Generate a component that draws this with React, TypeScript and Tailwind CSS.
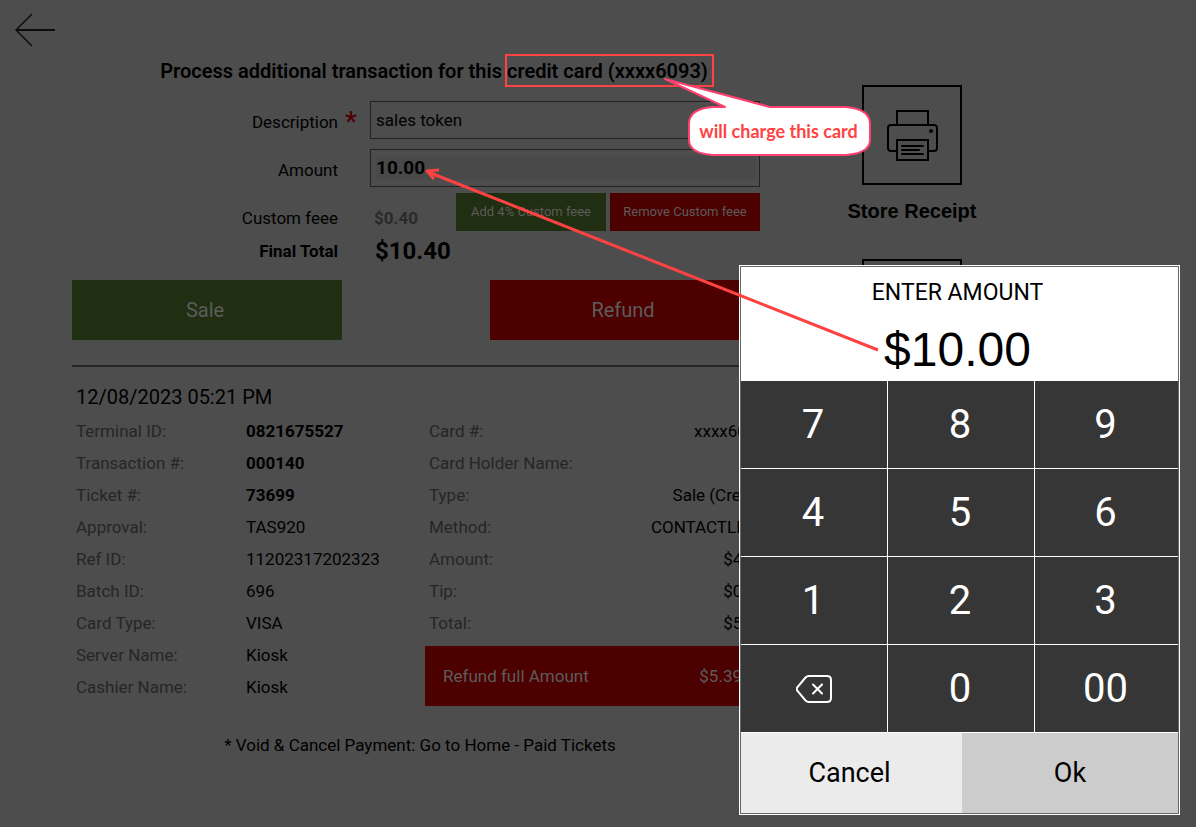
import { ReactNode } from 'react';

const leftDetails = [
  { label: 'Terminal ID:', value: '0821675527', bold: true },
  { label: 'Transaction #:', value: '000140', bold: true },
  { label: 'Ticket #:', value: '73699', bold: true },
  { label: 'Approval:', value: 'TAS920' },
  { label: 'Ref ID:', value: '11202317202323' },
  { label: 'Batch ID:', value: '696' },
  { label: 'Card Type:', value: 'VISA' },
  { label: 'Server Name:', value: 'Kiosk' },
  { label: 'Cashier Name:', value: 'Kiosk' },
];

const rightDetails = [
  { label: 'Card #:', value: 'xxxx6093' },
  { label: 'Card Holder Name:', value: '' },
  { label: 'Type:', value: 'Sale (Credit)' },
  { label: 'Method:', value: 'CONTACTLESS' },
  { label: 'Amount:', value: '$4.90' },
  { label: 'Tip:', value: '$0.49' },
  { label: 'Total:', value: '$5.39' },
];

const keys = ['7', '8', '9', '4', '5', '6', '1', '2', '3', 'back', '0', '00'];

function ArrowLeft() {
  return (
    <svg width="40" height="34" viewBox="0 0 40 34" fill="none" stroke="#0c0c0c">
      <path d="M1 17H40" strokeWidth="2" />
      <path d="M17 1L1 17L17 33" strokeWidth="1.5" />
    </svg>
  );
}

function Printer() {
  return (
    <svg width="52" height="52" viewBox="0 0 52 52" fill="none" stroke="#000" strokeWidth="2">
      <path d="M11 16V2H42V16" />
      <path d="M11 42H5Q2 42 2 39V19Q2 16 5 16H48Q51 16 51 19V39Q51 42 48 42H42" />
      <path d="M11 31H42V51H11Z" />
      <path d="M16 37H37M16 41H33M16 45H37" strokeLinecap="round" />
      <circle cx="45" cy="22" r="2" fill="#000" stroke="none" />
    </svg>
  );
}

function Backspace() {
  return (
    <svg width="36" height="28" viewBox="0 0 36 28" fill="none" stroke="#fff" strokeWidth="2">
      <path d="M13 1H31Q35 1 35 5V23Q35 27 31 27H13Q11 27 9.500 25.500L1.500 16Q0 14 1.500 12L9.500 2.500Q11 1 13 1Z" />
      <path d="M17 9.500L26 18.500M26 9.500L17 18.500" strokeLinecap="round" />
    </svg>
  );
}

function FieldLabel({ htmlFor, children }: { htmlFor: string; children: ReactNode }) {
  return (
    <label htmlFor={htmlFor} className="pt-1 text-right">
      {children}
    </label>
  );
}

function TransactionForm() {
  return (
    <form className="flex flex-col">
      <div className="grid grid-cols-[266px_32px_1fr] items-center gap-y-[10px]">
        <FieldLabel htmlFor="description">Description</FieldLabel>
        <span className="pr-1.5 pt-1 text-center text-[28px] leading-[34px] text-[#4d0000]">*</span>
        <input
          id="description"
          defaultValue="sales token"
          className="h-[38px] w-full border border-[#222] px-[5px]"
        />

        <FieldLabel htmlFor="amount">Amount</FieldLabel>
        <span />
        <div className="flex h-[38px] items-center border border-[#222] pl-[5px] pr-[3px]">
          <input
            id="amount"
            defaultValue="10.00"
            className="h-6 w-full bg-[#494949] text-[19px] font-bold"
          />
        </div>
      </div>

      <div className="mt-[6px] grid grid-cols-[266px_32px_1fr] items-center">
        <span className="pt-3 text-right">Custom feee</span>
        <span />
        <div className="flex items-center justify-between">
          <span className="pt-3 pl-1 font-bold text-[#2a2a2a]">$0.40</span>
          <div className="flex gap-1 text-[13px] text-[#5c5c5c]">
            <button type="button" className="h-[38px] w-[150px] bg-[#202e11]">
              Add 4% Custom feee
            </button>
            <button type="button" className="h-[38px] w-[150px] bg-[#4d0000]">
              Remove Custom feee
            </button>
          </div>
        </div>
      </div>

      <div className="mt-1 grid grid-cols-[266px_32px_1fr] items-center font-bold">
        <span className="text-right">Final Total</span>
        <span />
        <span className="pl-[5px] text-2xl">$10.40</span>
      </div>

      <div className="mt-[13px] flex justify-between text-xl text-[#5c5c5c]">
        <button type="button" className="h-[60px] w-[270px] bg-[#202e11] pr-1">
          Sale
        </button>
        <button type="button" className="h-[60px] w-[270px] bg-[#4d0000] pr-1">
          Refund
        </button>
      </div>
    </form>
  );
}

function Details() {
  return (
    <section className="mt-[25px] border-t-2 border-[#262626] pt-4">
      <h2 className="pl-1 text-xl leading-7">12/08/2023 05:21 PM</h2>

      <div className="mt-1 flex items-start justify-between">
        <dl className="grid grid-cols-[170px_auto] pl-1 leading-8">
          {leftDetails.map((item) => (
            <div key={item.label} className="col-span-2 grid grid-cols-subgrid">
              <dt className="text-[#262626]">{item.label}</dt>
              <dd className={item.bold ? 'font-bold' : ''}>{item.value}</dd>
            </div>
          ))}
        </dl>

        <div className="w-[335px]">
          <dl className="-mr-1.5 pl-1 leading-8">
            {rightDetails.map((item) => (
              <div key={item.label} className="flex justify-between">
                <dt className="text-[#262626]">{item.label}</dt>
                <dd>{item.value}</dd>
              </div>
            ))}
          </dl>
          <button
            type="button"
            className="mt-[7px] flex h-[60px] w-full items-center justify-between bg-[#4d0000] px-[18px] text-[#5c5c5c]"
          >
            <span>Refund full Amount</span>
            <span>$5.39</span>
          </button>
        </div>
      </div>

      <p className="mt-[27px] pl-2 text-center">
        * Void &amp; Cancel Payment: Go to Home - Paid Tickets
      </p>
    </section>
  );
}

function ReceiptButton({ label }: { label: string }) {
  return (
    <button type="button" className="flex flex-col items-center gap-3">
      <span className="flex size-[100px] items-center justify-center border-2 border-black">
        <Printer />
      </span>
      <span className="font-['Liberation_Sans',Arial,sans-serif] text-xl font-bold leading-7">
        {label}
      </span>
    </button>
  );
}

function AmountDialog() {
  return (
    <div
      role="dialog"
      aria-label="Enter amount"
      className="absolute right-4 top-[265px] w-[441px] border border-white bg-[#666] p-px text-black"
    >
      <div className="flex h-[114px] flex-col items-center bg-white pr-1 pt-[10px]">
        <h2 className="text-[23px] leading-8">ENTER AMOUNT</h2>
        <output className="mt-4 font-['Liberation_Sans',Arial,sans-serif] text-[48px] leading-[50px]">
          $10.00
        </output>
      </div>

      {/* keypad */}
      <div className="grid grid-cols-[146px_146px_1fr] gap-px bg-white pb-px text-[40px] text-white">
        {keys.map((key) =>
          key === 'back' ? (
            <button
              key={key}
              type="button"
              aria-label="Backspace"
              className="flex h-[87px] items-center justify-center bg-[#363636]"
            >
              <Backspace />
            </button>
          ) : (
            <button key={key} type="button" className="h-[87px] bg-[#363636] pr-0.5">
              {key}
            </button>
          ),
        )}
      </div>

      <div className="flex h-20 text-[27px]">
        <button type="button" className="w-[221px] bg-[#ebebeb] pr-1">
          Cancel
        </button>
        <button type="button" className="flex-1 bg-[#ccc]">
          Ok
        </button>
      </div>
    </div>
  );
}

function Annotations() {
  return (
    <>
      <svg
        className="pointer-events-none absolute left-0 top-0"
        width="900"
        height="360"
        viewBox="0 0 900 360"
        fill="none"
      >
        <path d="M878 350L428 172" stroke="#ff4343" strokeWidth="3" />
        <path d="M439 170L427 171L434 179" stroke="#ff4343" strokeWidth="3" strokeLinejoin="round" />
        <path
          d="M725 107L665 79L770 107H846Q870 109 870 124V140Q870 153 846 155H712Q689 153 689 140V124Q689 109 712 107Z"
          fill="#fff"
          stroke="#ff4070"
          strokeWidth="2"
          strokeLinejoin="round"
        />
      </svg>
      <p className="absolute left-[688px] top-[106px] w-[181px] text-center font-[Lato,sans-serif] text-[18px] font-bold leading-[50px] text-[#ff4343]">
        will charge this card
      </p>
    </>
  );
}

export default function App() {
  return (
    <div className="relative min-h-screen overflow-hidden bg-[#4d4d4d] font-[Roboto,sans-serif] text-[17px] leading-6 text-black">
      <header className="h-[54px] pl-[15px] pt-[13px]">
        <button type="button" aria-label="Back">
          <ArrowLeft />
        </button>
      </header>

      <div className="flex pl-[72px]">
        <main className="w-full max-w-[688px]">
          <h1 className="mb-3 flex items-start justify-center pl-[42px] text-xl font-semibold leading-[35px]">
            <span className="whitespace-pre">Process additional transaction for this </span>
            <span className="-ml-0.5 whitespace-nowrap border-2 border-[#ff4343] pr-1 pt-0.5 leading-[27px]">
              credit card (xxxx6093)
            </span>
          </h1>
          <TransactionForm />
          <Details />
        </main>

        <aside className="flex w-[304px] flex-col items-center gap-[34px] pt-[31px]">
          <ReceiptButton label="Store Receipt" />
          <ReceiptButton label="Customer Receipt" />
        </aside>
      </div>

      <AmountDialog />
      <Annotations />
    </div>
  );
}
